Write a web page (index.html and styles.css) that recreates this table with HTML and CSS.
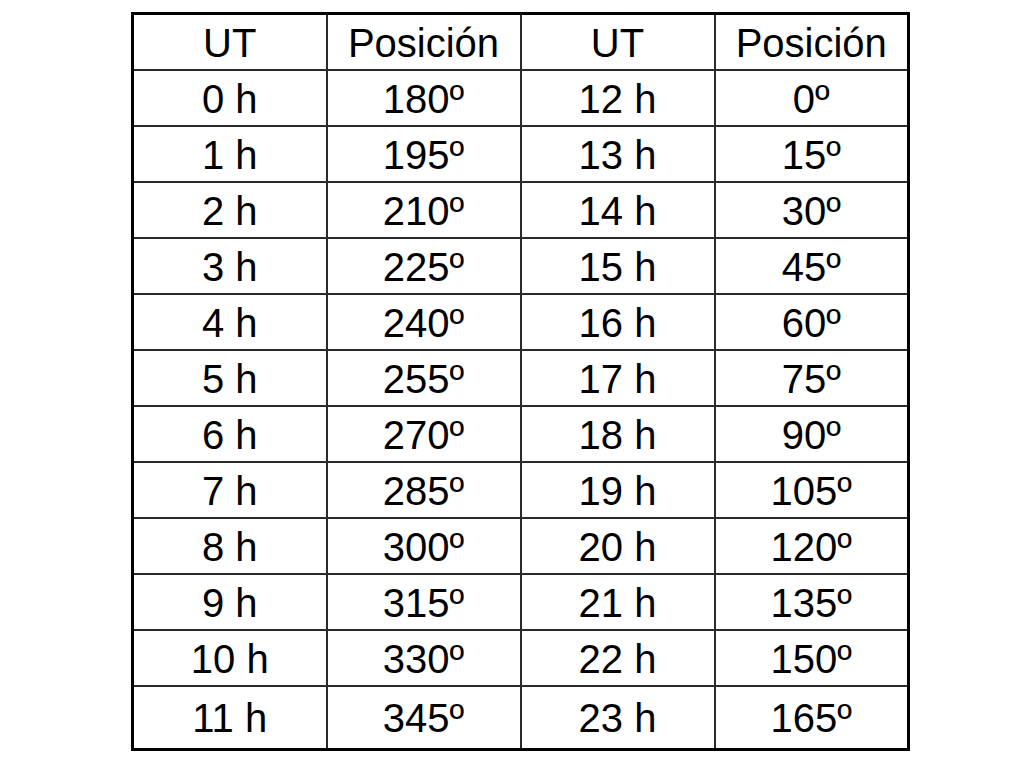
FILE: index.html
```html
<!DOCTYPE html>
<html lang="es">
<head>
<meta charset="utf-8">
<title>UT Posición</title>
<link rel="stylesheet" href="styles.css">
</head>
<body>
<table class="grid">
<tr><td>UT</td><td>Posición</td><td>UT</td><td>Posición</td></tr>
<tr><td>0 h</td><td>180º</td><td>12 h</td><td>0º</td></tr>
<tr><td>1 h</td><td>195º</td><td>13 h</td><td>15º</td></tr>
<tr><td>2 h</td><td>210º</td><td>14 h</td><td>30º</td></tr>
<tr><td>3 h</td><td>225º</td><td>15 h</td><td>45º</td></tr>
<tr><td>4 h</td><td>240º</td><td>16 h</td><td>60º</td></tr>
<tr><td>5 h</td><td>255º</td><td>17 h</td><td>75º</td></tr>
<tr><td>6 h</td><td>270º</td><td>18 h</td><td>90º</td></tr>
<tr><td>7 h</td><td>285º</td><td>19 h</td><td>105º</td></tr>
<tr><td>8 h</td><td>300º</td><td>20 h</td><td>120º</td></tr>
<tr><td>9 h</td><td>315º</td><td>21 h</td><td>135º</td></tr>
<tr><td>10 h</td><td>330º</td><td>22 h</td><td>150º</td></tr>
<tr class="last"><td>11 h</td><td>345º</td><td>23 h</td><td>165º</td></tr>
</table>
</body>
</html>
```
FILE: styles.css
```css
html, body {
  margin: 0;
  padding: 0;
  background: #fff;
}
body {
  padding: 12px 0 0 131px;
  font-family: "Liberation Sans", Arial, sans-serif;
}
.grid {
  border-collapse: collapse;
  width: 779px;
  border: 3px solid #000;
  table-layout: fixed;
}
.grid tr {
  height: 56px;
}
.grid tr.last {
  height: 64px;
}
.grid td {
  border: 2px solid #2a2a2a;
  text-align: center;
  vertical-align: middle;
  font-size: 40px;
  color: #000;
  padding: 2px 0 0 0;
  line-height: 1;
}
```
